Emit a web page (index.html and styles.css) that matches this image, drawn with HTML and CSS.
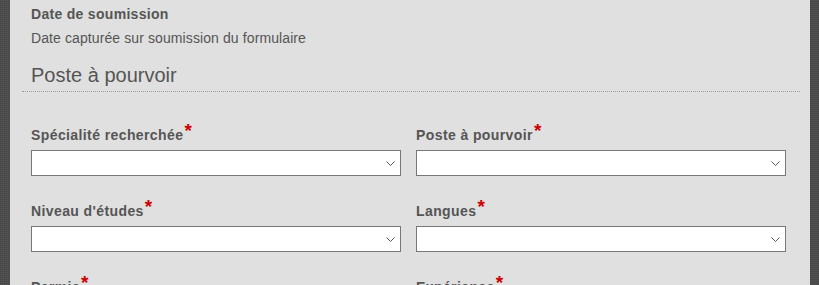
FILE: index.html
```html
<!DOCTYPE html>
<html lang="fr">
  <head>
    <meta charset="UTF-8" />
    <meta name="viewport" content="width=device-width, initial-scale=1.0" />
    <title>Formulaire</title>
    <link rel="stylesheet" href="styles.css">
  </head>
  <body>
    <div class="panel">
      <div class="info">
        <h3 class="info-title">Date de soumission</h3>
        <p class="info-text">Date capturée sur soumission du formulaire</p>
      </div>

      <h2 class="section-title">Poste à pourvoir</h2>

      <div class="grid">
        <div class="field">
          <label class="field-label">Spécialité recherchée<span class="req">*</span></label>
          <select class="field-select"><option></option></select>
        </div>
        <div class="field">
          <label class="field-label">Poste à pourvoir<span class="req">*</span></label>
          <select class="field-select"><option></option></select>
        </div>
        <div class="field">
          <label class="field-label">Niveau d'études<span class="req">*</span></label>
          <select class="field-select"><option></option></select>
        </div>
        <div class="field">
          <label class="field-label">Langues<span class="req">*</span></label>
          <select class="field-select"><option></option></select>
        </div>
        <div class="field">
          <label class="field-label">Permis<span class="req">*</span></label>
          <select class="field-select"><option></option></select>
        </div>
        <div class="field">
          <label class="field-label">Expérience<span class="req">*</span></label>
          <select class="field-select"><option></option></select>
        </div>
      </div>
    </div>
  </body>
</html>
```

FILE: styles.css
```css
html,
body {
  margin: 0;
  height: 100%;
  overflow: hidden;
}

body {
  background-color: #4b4b4b;
  background-image: repeating-linear-gradient(
      0deg,
      rgba(255, 255, 255, 0.05) 0 1px,
      transparent 1px 2px
    ),
    repeating-linear-gradient(
      90deg,
      rgba(0, 0, 0, 0.08) 0 1px,
      transparent 1px 2px
    );
  font-family: "Liberation Sans", Arial, sans-serif;
  color: #555;
}

.panel {
  width: 800px;
  margin: 0 10px;
  min-height: 100%;
  background: #e0e0e0;
  padding: 6px 0 0 0;
  box-sizing: border-box;
}

.info {
  padding-left: 21px;
}

.info-title {
  margin: 0;
  font-size: 14px;
  font-weight: bold;
  line-height: 17px;
  letter-spacing: 0.3px;
  color: #555;
}

.info-text {
  margin: 7px 0 0;
  font-size: 14px;
  line-height: 17px;
  letter-spacing: 0.1px;
  color: #555;
}

.section-title {
  margin: 16px 10px 0 12px;
  padding: 0 0 4px 9px;
  font-size: 20px;
  font-weight: normal;
  line-height: 24px;
  color: #555;
  border-bottom: 1px dotted #999;
}

.grid {
  display: grid;
  grid-template-columns: 370px 370px;
  column-gap: 15px;
  row-gap: 27px;
  padding: 35px 0 0 21px;
}

.field {
  display: flex;
  flex-direction: column;
}

.field-label {
  font-size: 14px;
  font-weight: bold;
  line-height: 17px;
  letter-spacing: 0.4px;
  margin-bottom: 6px;
}

.req {
  color: #c00;
  font-size: 19px;
  line-height: 0;
  position: relative;
  top: -3px;
  margin-left: 1px;
}

.field-select {
  appearance: none;
  -webkit-appearance: none;
  height: 26px;
  margin: 0;
  border: 1px solid #777;
  border-radius: 0;
  background-color: #fff;
  background-image: url("data:image/svg+xml,%3Csvg xmlns='http://www.w3.org/2000/svg' width='9' height='5'%3E%3Cpath d='M0.5 0.5 L4.5 4.5 L8.5 0.5' fill='none' stroke='%23555' stroke-width='1'/%3E%3C/svg%3E");
  background-repeat: no-repeat;
  background-position: right 5px center;
  font-family: inherit;
  font-size: 13px;
}
```
